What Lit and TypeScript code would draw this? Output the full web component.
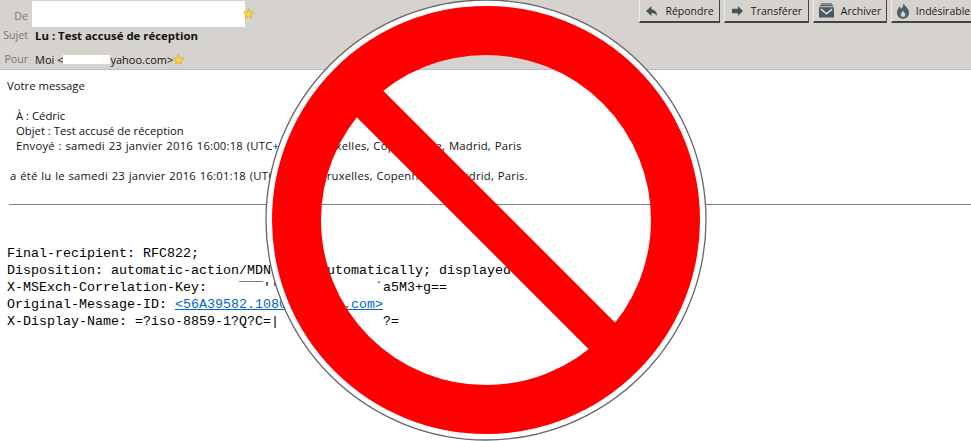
import { LitElement, html, css, svg } from "lit";
import { customElement } from "lit/decorators.js";

const star = svg`<svg class="star" width="11" height="11" viewBox="0 0 13 13"><path d="M6.500 .6 8.300 4.400 12.500 5 9.400 7.800 10.200 12 6.500 10 2.800 12 3.600 7.800 .5 5 4.700 4.400Z" fill="#f8d548" stroke="#d9a520" stroke-width=".8"/></svg>`;

const icons = {
  reply: svg`<svg width="13" height="12" viewBox="0 0 14 13"><path d="M7 1 1 6.500 7 12V8.600c2.600 0 4.500.9 6 3.400 0-4.400-2.400-7-6-7.400Z" fill="#46545c"/></svg>`,
  fwd: svg`<svg width="13" height="10" viewBox="0 0 13 11"><path d="M7 0 12.500 5.500 7 11V8H.5V3H7Z" fill="#46545c"/></svg>`,
  archive: svg`<svg width="15" height="15" viewBox="0 0 16 15"><path d="M2 0h12v1H2ZM1 2h14v1H1Z" fill="#333d42"/><path d="M0 4h16v11H0Z" fill="#4a5a62"/><path d="M2 6 8 11 14 6" fill="none" stroke="#dfe4e6" stroke-width="1.500"/></svg>`,
  junk: svg`<svg width="12" height="16" viewBox="0 0 13 17"><path d="M7 0C7.500 2.500 13 5 13 10.500 13 14.500 10 17 6.500 17S0 14.500 0 10.500C0 7 2 5 3 3C3.500 4.500 4 5.500 5 6 6 4.500 7 2 7 0Z" fill="#4d5f68"/><path d="M6.500 8C7.500 10 9 11 9 12.500A2.500 2.500 0 0 1 4 12.500C4 11 5.500 10 6.500 8Z" fill="#cfd6d9"/></svg>`,
};

@customElement("app-root")
export class AppRoot extends LitElement {
  static styles = css`
    :host {
      display: block;
      position: relative;
      width: 971px;
      height: 441px;
      overflow: hidden;
      background: #fff;
      font-family: "Open Sans", "DejaVu Sans", sans-serif;
      font-size: 11.300px;
      color: #111;
    }
    .header {
      height: 69px;
      background: #d6d3ce;
      border-bottom: 1px solid #b4c0d4;
      display: flex;
      justify-content: space-between;
      overflow: hidden;
    }
    .fields {
      display: grid;
      grid-template-columns: 28px 1fr;
      grid-template-rows: 25px 20px 24px;
      column-gap: 7px;
      align-items: center;
    }
    .label {
      color: #77777a;
      text-align: right;
      font-size: 10.600px;
    }
    .de {
      margin-top: 7px;
    }
    .third {
      margin-top: 4px;
    }
    .pour {
      font-size: 11px;
    }
    .value {
      display: flex;
      align-items: center;
    }
    .from {
      align-self: start;
      align-items: flex-start;
    }
    .from .mask {
      width: 213px;
      height: 26px;
      margin: 1px 0 0 -3px;
      background: #fff;
    }
    .from .star {
      margin: 8px 0 0 -2px;
    }
    .subject {
      font-weight: 700;
      font-size: 11.400px;
      color: #111;
    }
    .hide {
      display: inline-block;
      width: 47px;
      height: 9px;
      background: #fff;
    }
    .actions {
      display: flex;
      gap: 4px;
      margin-right: -5px;
      align-self: flex-start;
    }
    .btn {
      display: flex;
      align-items: center;
      justify-content: center;
      gap: 7px;
      height: 23px;
      box-sizing: border-box;
      background: #d6d3ce;
      border: 1px solid #eeece8;
      border-right-color: #444;
      border-bottom: 2px solid #444;
      border-top: none;
      font-size: 10.500px;
      color: #1a1a1a;
      white-space: nowrap;
    }
    .r {
      width: 81px;
    }
    .t {
      width: 85px;
    }
    .a {
      width: 74px;
    }
    .i {
      width: 85px;
    }
    .body {
      padding: 8px 7px 0;
      line-height: 15px;
    }
    .indent {
      margin: 15px 0 0 9px;
    }
    .read {
      margin: 15px 0 0 3px;
    }
    .date {
      word-spacing: 0.6px;
      letter-spacing: 0.2px;
    }
    hr {
      margin: 21px -7px 0 2px;
      border: 0;
      height: 1px;
      background: #7f7f7f;
    }
    .mono {
      margin-top: 40px;
      font-family: "Liberation Mono", monospace;
      font-size: 13.330px;
      line-height: 17px;
      white-space: pre;
      color: #000;
    }
    a {
      color: #0066cc;
      text-decoration: underline;
    }
    .sign {
      position: absolute;
      left: 264px;
      top: 0;
      width: 444px;
      height: 441px;
    }
  `;

  render() {
    return html`
      <div class="header">
        <div class="fields">
          <div class="label de">De</div>
          <div class="value from"><div class="mask"></div>${star}</div>
          <div class="label">Sujet</div>
          <div class="value subject">Lu : Test accusé de réception</div>
          <div class="label third">Pour</div>
          <div class="value third pour">Moi &lt;<span class="hide"></span>yahoo.com&gt;${star}</div>
        </div>
        <div class="actions">
          <div class="btn r">${icons.reply}Répondre</div>
          <div class="btn t">${icons.fwd}Transférer</div>
          <div class="btn a">${icons.archive}Archiver</div>
          <div class="btn i">${icons.junk}Indésirable</div>
        </div>
      </div>
      <div class="body">
        <div>Votre message</div>
        <div class="indent">
          <div>À : Cédric</div>
          <div>Objet : Test accusé de réception</div>
          <div class="date">Envoyé : samedi 23 janvier 2016 16:00:18 (UTC+01:00) Bruxelles, Copenhague, Madrid, Paris</div>
        </div>
        <div class="read date">a été lu le samedi 23 janvier 2016 16:01:18 (UTC+01:00) Bruxelles, Copenhague, Madrid, Paris.</div>
        <hr />
        <div class="mono">Final-recipient: RFC822;
Disposition: automatic-action/MDN-sent-automatically; displayed
X-MSExch-Correlation-Key:    ¯¯¯''¯           ´a5M3+g==
Original-Message-ID: <a>&lt;56A39582.1080800@yah.com&gt;</a>
X-Display-Name: =?iso-8859-1?Q?C=|             ?=</div>
      </div>
      <svg class="sign" viewBox="264 0 444 441">
        <circle cx="486" cy="220" r="217" fill="none" stroke="#fff" stroke-width="6"/>
        <circle cx="486" cy="220" r="220" fill="none" stroke="#666" stroke-width="1.300"/>
        <circle cx="486" cy="220" r="189.500" fill="none" stroke="#f00" stroke-width="49"/>
        <path d="M355 89 617 351" fill="none" stroke="#f00" stroke-width="37.500"/>
      </svg>
    `;
  }
}
